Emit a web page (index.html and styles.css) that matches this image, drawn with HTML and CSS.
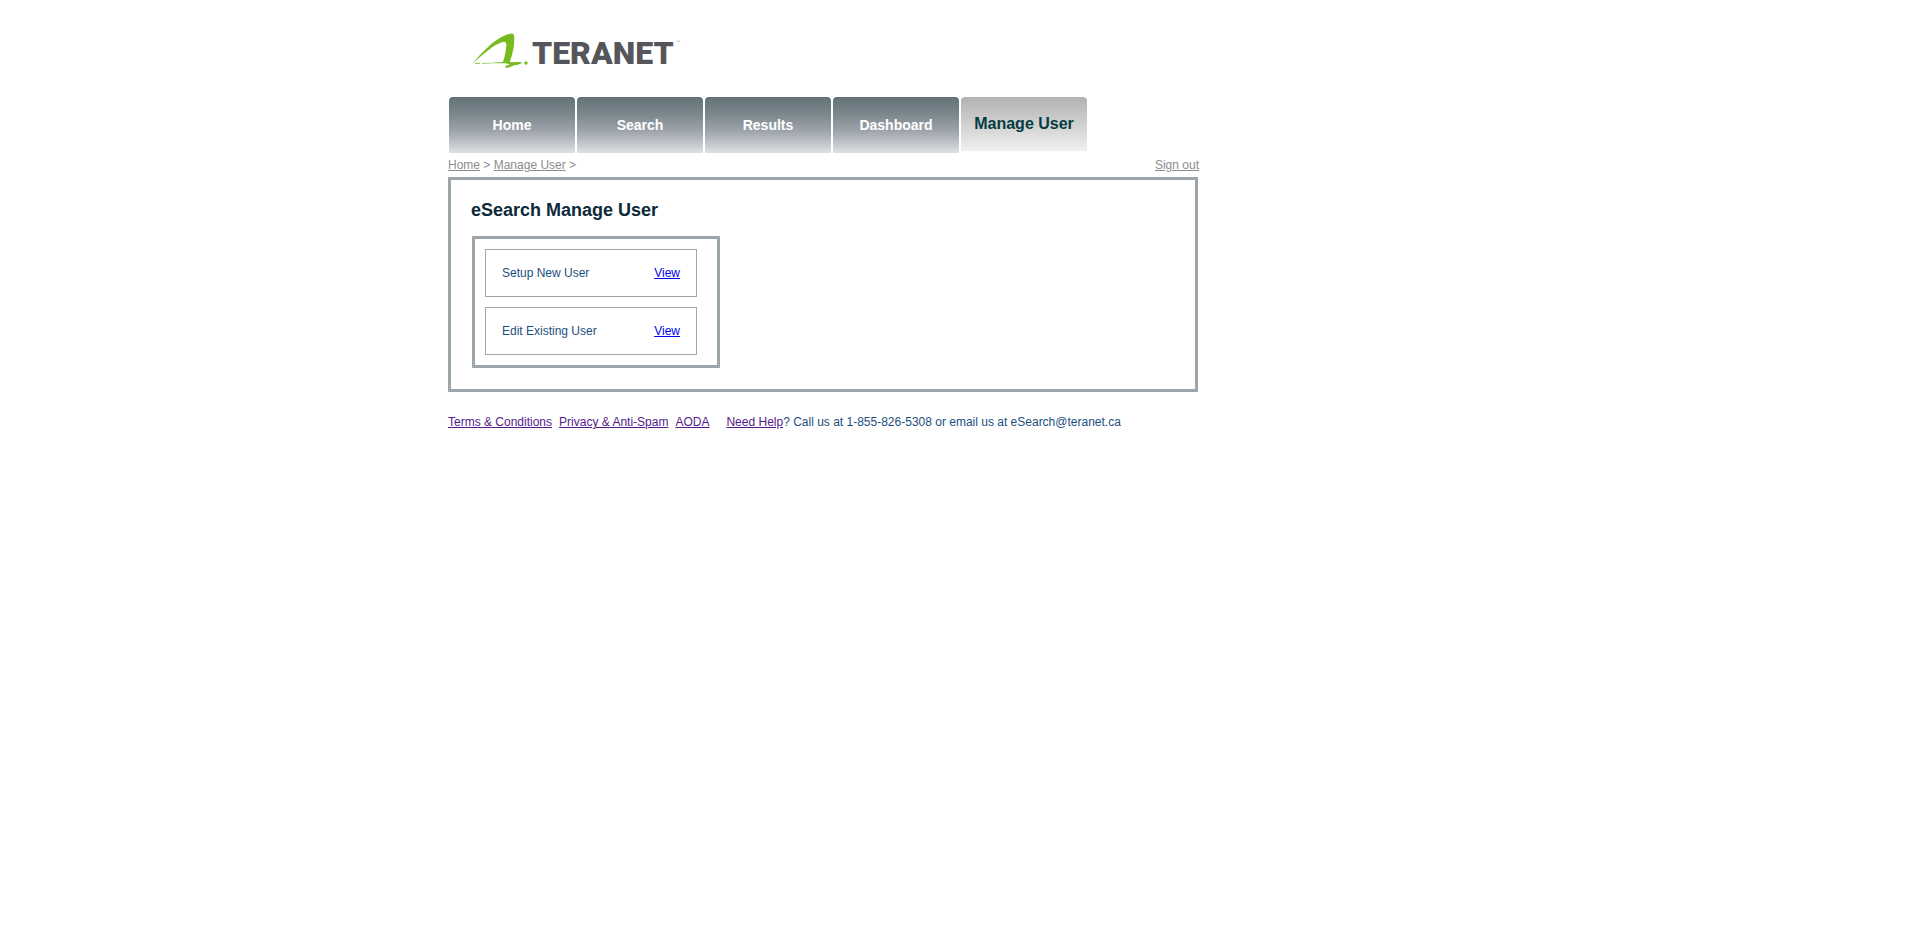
FILE: index.html
```html
<!DOCTYPE html>
<html lang="en">
<head>
<meta charset="utf-8">
<title>eSearch Manage User</title>
<link rel="stylesheet" href="styles.css">
</head>
<body>
<div class="page">
  <header class="brand">
    <svg class="mark" viewBox="0 0 180 114" aria-hidden="true">
      <path d="M2 95 C14 78 28 64 46 47 C66 28 92 9 116 5 C124 4 127 8 127 18 C127 43 122 68 113 90 L124 91 C136 90 147 89 150 92 C145 97 135 98 126 100 C118 104 112 107 106 107 L98 106 L102 101 L114 97 L100 94 L60 94 L30 95 L30 93 L60 92 L93 90 C99 73 102 54 103 39 C103 30 99 28 90 31 C66 38 36 64 2 95 Z"/>
      <path d="M10 93 L24 92 L24 95 L8 95 Z"/>
      <circle cx="162" cy="93" r="5"/>
    </svg>
    <span class="wordmark">TERANET</span><span class="tm">™</span>
  </header>
  <nav class="tabs">
    <a class="tab" href="#">Home</a>
    <a class="tab" href="#">Search</a>
    <a class="tab" href="#">Results</a>
    <a class="tab" href="#">Dashboard</a>
    <a class="tab current" href="#" aria-current="page">Manage User</a>
  </nav>
  <div class="crumbs">
    <div><a href="#">Home</a> &gt; <a href="#">Manage User</a> &gt;</div>
    <a href="#">Sign out</a>
  </div>
  <main class="panel">
    <h1>eSearch Manage User</h1>
    <ul class="actions">
      <li><span>Setup New User</span><a href="#">View</a></li>
      <li><span>Edit Existing User</span><a href="#">View</a></li>
    </ul>
  </main>
  <footer class="footer">
    <a href="#">Terms &amp; Conditions</a>
    <a href="#">Privacy &amp; Anti-Spam</a>
    <a href="#">AODA</a>
    <div class="help"><a href="#">Need Help</a>? Call us at 1-855-826-5308 or email us at eSearch@teranet.ca</div>
  </footer>
</div>
</body>
</html>
```
FILE: styles.css
```css
body {
  margin: 0;
  background: #fff;
  color: #1b4f7e;
  font: 12px/16px "Liberation Sans", Arial, sans-serif;
}
.page {
  max-width: 1024px;
  margin: 0 auto;
}
.brand {
  display: flex;
  align-items: flex-start;
  padding: 32px 24px 23px;
}
.mark {
  width: 60px;
  height: 38px;
  fill: #76bc21;
}
.wordmark {
  color: #55565b;
  font: 900 32px/42px Roboto, sans-serif;
}
.tm {
  margin-left: 2px;
  color: #999;
  font-size: 4px;
  line-height: 20px;
}
.tabs {
  display: flex;
  align-items: flex-start;
  gap: 2px;
  padding-left: 1px;
}
.tab {
  width: 126px;
  border-radius: 4px 4px 0 0;
  background: linear-gradient(#637179, #7b878d 30%, #9da3aa 60%, #dce0e3);
  color: #fff;
  font-size: 14px;
  font-weight: bold;
  line-height: 56px;
  text-align: center;
  text-decoration: none;
}
.tab.current {
  background: linear-gradient(#b2b2b2, #d0d0d0 50%, #f0f0f0);
  color: #043c42;
  font-size: 16px;
  line-height: 54px;
}
.crumbs {
  display: flex;
  justify-content: space-between;
  max-width: 751px;
  padding: 4px 0;
  color: #8c8c8c;
}
.crumbs a {
  color: inherit;
}
.panel {
  box-sizing: border-box;
  max-width: 750px;
  padding: 20px 20px 21px;
  border: 3px solid #9ca6ab;
}
h1 {
  margin: 0 0 16px;
  color: #0c2a3a;
  font-size: 18px;
  line-height: 20px;
}
.actions {
  display: flex;
  flex-direction: column;
  gap: 10px;
  max-width: 212px;
  margin: 0 1px;
  padding: 10px 20px 10px 10px;
  border: 3px solid #9ca6ab;
  list-style: none;
}
.actions li {
  display: flex;
  justify-content: space-between;
  padding: 15px 16px;
  border: 1px solid #9ca6ab;
}
.actions a {
  color: #00e;
}
.footer {
  display: flex;
  flex-wrap: wrap;
  gap: 7px;
  padding: 22px 0;
}
.footer a {
  color: #551a8b;
}
.help {
  margin-left: 10px;
}
```
